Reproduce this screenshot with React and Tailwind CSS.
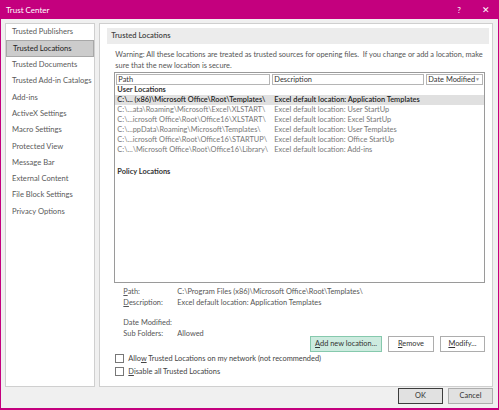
import React from "react";

const F = { fontFamily: 'Lato, "Noto Sans", sans-serif' };

const leftItems = [
  "Trusted Publishers",
  "Trusted Locations",
  "Trusted Documents",
  "Trusted Add-in Catalogs",
  "Add-ins",
  "ActiveX Settings",
  "Macro Settings",
  "Protected View",
  "Message Bar",
  "External Content",
  "File Block Settings",
  "Privacy Options",
];

const rows = [
  ["C:\\... (x86)\\Microsoft Office\\Root\\Templates\\", "Excel default location: Application Templates"],
  ["C:\\...ata\\Roaming\\Microsoft\\Excel\\XLSTART\\", "Excel default location: User StartUp"],
  ["C:\\...icrosoft Office\\Root\\Office16\\XLSTART\\", "Excel default location: Excel StartUp"],
  ["C:\\...ppData\\Roaming\\Microsoft\\Templates\\", "Excel default location: User Templates"],
  ["C:\\...icrosoft Office\\Root\\Office16\\STARTUP\\", "Excel default location: Office StartUp"],
  ["C:\\...\\Microsoft Office\\Root\\Office16\\Library\\", "Excel default location: Add-ins"],
];

function Btn({ children, className = "" }) {
  return (
    <div className={`flex items-center justify-center h-[16px] border text-[7.4px] text-[#333] whitespace-nowrap ${className}`}>
      {children}
    </div>
  );
}

export default function App() {
  return (
    <div style={F} className="w-[499px] h-[410px] bg-[#c4007e] flex flex-col overflow-hidden">
      <div className="h-[19px] flex items-center text-white text-[8px] pl-[6px] pr-[9px]">
        <span className="flex-1">Trust Center</span>
        <span className="w-[10px] text-center mr-[18px]">?</span>
        <span className="text-[9px]">✕</span>
      </div>
      <div className="flex-1 mx-[1px] mb-[2px] bg-[#f0f0f0] flex flex-col">
        <div className="flex gap-[4px] pl-[4px] pr-[5px] pt-[4px] h-[368px]">
          <div className="w-[92px] h-[364px] bg-white border border-[#cfcfcf] text-[7.6px] text-[#5a5a5a]">
            {leftItems.map((t, i) => (
              <div
                key={t}
                className={`h-[16.3px] flex items-center pl-[6px] whitespace-nowrap ${
                  i === 1 ? "bg-[#cccccc] border border-[#a8a8a8] text-[#222]" : ""
                }`}
              >
                {t}
              </div>
            ))}
          </div>
          <div className="flex-1 h-[364px] bg-white border border-[#cfcfcf] flex flex-col">
            <div className="mt-[4px] ml-[7px] mr-[3px] h-[16px] bg-[#ececec] flex items-center pl-[4px] text-[7.6px] font-semibold text-[#444]">
              Trusted Locations
            </div>
            <div className="ml-[15px] mr-[6px] mt-[5px] text-[7.4px] leading-[11px] text-[#555]">
              Warning: All these locations are treated as trusted sources for opening files.&nbsp; If you change or add a location, make sure that the new location is secure.
            </div>
            <div className="ml-[14px] mr-[7px] mt-[1px] h-[211px] border border-[#9a9a9a] flex flex-col text-[7.4px]">
              <div className="flex gap-[2px] px-[1px] pt-[1px] h-[12px]">
                <div className="w-[154px] border border-[#b5b5b5] pl-[1px] leading-[9px] text-[#333]">Path</div>
                <div className="w-[152px] border border-[#b5b5b5] pl-[1px] leading-[9px] text-[#333]">Description</div>
                <div className="flex-1 border border-[#b5b5b5] pl-[1px] leading-[9px] text-[#333] flex justify-between pr-[2px] whitespace-nowrap">
                  <span>Date Modified</span>
                  <span className="text-[5px] text-[#999] leading-[9px]">▼</span>
                </div>
              </div>
              <div className="pl-[2px] h-[10px] leading-[10px] font-bold text-[#333]">User Locations</div>
              {rows.map((r, i) => (
                <div
                  key={i}
                  className={`flex h-[10px] leading-[10px] pl-[2px] ${
                    i === 0 ? "bg-[#e0e0e0] text-[#222] font-semibold" : "text-[#777]"
                  }`}
                >
                  <span className="w-[157px] whitespace-nowrap overflow-hidden">{r[0]}</span>
                  <span className="whitespace-nowrap">{r[1]}</span>
                </div>
              ))}
              <div className="pl-[2px] mt-[12px] h-[10px] leading-[10px] font-bold text-[#333]">Policy Locations</div>
            </div>
            <div className="ml-[23px] mt-[3px] text-[7.4px] text-[#555] leading-[11px]">
              <div className="flex"><span className="w-[54px]"><u>P</u>ath:</span><span>C:\Program Files (x86)\Microsoft Office\Root\Templates\</span></div>
              <div className="flex"><span className="w-[54px]"><u>D</u>escription:</span><span>Excel default location: Application Templates</span></div>
              <div className="flex mt-[9px]"><span className="w-[54px]">Date Modified:</span><span></span></div>
              <div className="flex"><span className="w-[54px]">Sub Folders:</span><span>Allowed</span></div>
            </div>
            <div className="flex justify-end gap-[6px] mr-[7px] mt-[-3px]">
              <Btn className="w-[72px] bg-[#cdebdf] border-[#86c9ad]"><span><u>A</u>dd new location...</span></Btn>
              <Btn className="w-[46px] bg-white border-[#adadad]"><span><u>R</u>emove</span></Btn>
              <Btn className="w-[45px] bg-white border-[#adadad]"><span><u>M</u>odify...</span></Btn>
            </div>
            <div className="ml-[15px] mt-[2px] flex flex-col gap-[4px] text-[7.4px] text-[#444]">
              <div className="flex items-center gap-[4px] h-[9px]">
                <div className="w-[9px] h-[9px] border border-[#777] bg-white" />
                <span>Allo<u>w</u> Trusted Locations on my network (not recommended)</span>
              </div>
              <div className="flex items-center gap-[4px] h-[9px]">
                <div className="w-[9px] h-[9px] border border-[#777] bg-white" />
                <span><u>D</u>isable all Trusted Locations</span>
              </div>
            </div>
          </div>
        </div>
        <div className="flex justify-end gap-[5px] pr-[5px] pt-[1px]">
          <Btn className="w-[45px] bg-[#e1e1e1] border-[#3c3c3c] h-[16px]">OK</Btn>
          <Btn className="w-[45px] bg-[#e1e1e1] border-[#adadad] h-[16px]">Cancel</Btn>
        </div>
      </div>
    </div>
  );
}
